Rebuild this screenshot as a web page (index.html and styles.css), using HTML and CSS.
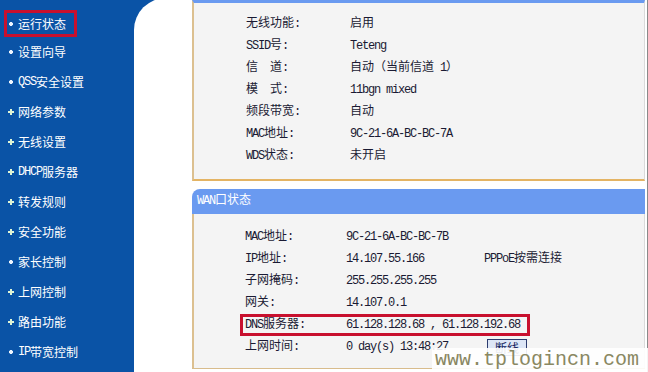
FILE: index.html
```html
<!DOCTYPE html>
<html lang="zh-CN">
<head>
<meta charset="utf-8">
<title>运行状态</title>
<link rel="stylesheet" href="styles.css">
</head>
<body>
<div class="page">
  <nav class="sidebar">
    <div class="item"><span class="box"><i class="ic dot"></i>运行状态</span></div>
    <div class="item"><i class="ic dot"></i>设置向导</div>
    <div class="item"><i class="ic dot"></i><span class="en">QSS</span>安全设置</div>
    <div class="item"><i class="ic plus"></i>网络参数</div>
    <div class="item"><i class="ic plus"></i>无线设置</div>
    <div class="item"><i class="ic plus"></i><span class="en">DHCP</span>服务器</div>
    <div class="item"><i class="ic plus"></i>转发规则</div>
    <div class="item"><i class="ic plus"></i>安全功能</div>
    <div class="item"><i class="ic dot"></i>家长控制</div>
    <div class="item"><i class="ic plus"></i>上网控制</div>
    <div class="item"><i class="ic plus"></i>路由功能</div>
    <div class="item"><i class="ic dot"></i><span class="en">IP</span>带宽控制</div>
  </nav>
  <div class="main">
    <div class="content">
      <section class="panel panel-wlan">
        <div class="rows">
          <div class="row"><span class="lbl">无线功能<span class="en">:</span></span><span class="val">启用</span></div>
          <div class="row"><span class="lbl"><span class="en">SSID</span>号<span class="en">:</span></span><span class="val en">Teteng</span></div>
          <div class="row"><span class="lbl">信<span class="en">&nbsp;&nbsp;</span>道<span class="en">:</span></span><span class="val">自动（当前信道<span class="en"> 1</span>）</span></div>
          <div class="row"><span class="lbl">模<span class="en">&nbsp;&nbsp;</span>式<span class="en">:</span></span><span class="val en">11bgn mixed</span></div>
          <div class="row"><span class="lbl">频段带宽<span class="en">:</span></span><span class="val">自动</span></div>
          <div class="row"><span class="lbl"><span class="en">MAC</span>地址<span class="en">:</span></span><span class="val en">9C-21-6A-BC-BC-7A</span></div>
          <div class="row"><span class="lbl"><span class="en">WDS</span>状态<span class="en">:</span></span><span class="val">未开启</span></div>
        </div>
      </section>
      <section class="panel panel-wan">
        <div class="head"><span class="en">WAN</span>口状态</div>
        <div class="rows">
          <div class="row"><span class="lbl"><span class="en">MAC</span>地址<span class="en">:</span></span><span class="val en">9C-21-6A-BC-BC-7B</span></div>
          <div class="row"><span class="lbl"><span class="en">IP</span>地址<span class="en">:</span></span><span class="val en">14.107.55.166</span><span class="extra"><span class="en">PPPoE</span>按需连接</span></div>
          <div class="row"><span class="lbl">子网掩码<span class="en">:</span></span><span class="val en">255.255.255.255</span></div>
          <div class="row"><span class="lbl">网关<span class="en">:</span></span><span class="val en">14.107.0.1</span></div>
          <div class="row hl"><span class="lbl"><span class="en">DNS</span>服务器<span class="en">:</span></span><span class="val en wide">61.128.128.68 , 61.128.192.68</span></div>
          <div class="row"><span class="lbl">上网时间<span class="en">:</span></span><span class="val en">0 day(s) 13:48:27</span><span class="extra"><button class="btn" type="button">断线</button></span></div>
        </div>
      </section>
    </div>
  </div>
</div>
<div class="watermark">www.tplogincn.com</div>
</body>
</html>
```

FILE: styles.css
```css
html, body {
  margin: 0;
  padding: 0;
}

body {
  width: 648px;
  height: 372px;
  overflow: hidden;
  position: relative;
  font-family: "Liberation Mono", "Noto Sans CJK SC", monospace;
  font-size: 12px;
  color: #1a1a33;
  background: #fff;
}

.en {
  font-family: "Liberation Mono", monospace;
  letter-spacing: -1.2px;
}

.page {
  display: flex;
  height: 372px;
  background: #0a53a6;
}

/* ---------- sidebar ---------- */
.sidebar {
  width: 134px;
  flex: none;
  padding-top: 7px;
  color: #fff;
}

.item {
  height: 30px;
  display: flex;
  align-items: center;
  padding-left: 7px;
  white-space: nowrap;
}

.ic {
  width: 8px;
  height: 8px;
  margin-right: 3px;
  flex: none;
  display: block;
}

.dot {
  background: radial-gradient(circle, #eef6ff 0 1.8px, transparent 2.2px);
}

.plus {
  background:
    linear-gradient(#dff5d6, #dff5d6) center / 6px 2px no-repeat,
    linear-gradient(#dff5d6, #dff5d6) center / 2px 6px no-repeat;
}

.box {
  display: flex;
  align-items: center;
  align-self: flex-end;
  height: 27px;
  box-sizing: border-box;
  margin-left: -3px;
  padding-right: 8px;
  border: 3px solid #c8102e;
}

/* ---------- main ---------- */
.main {
  flex: 1;
  display: flex;
  flex-direction: column;
}

.content {
  flex: 1;
  margin-top: -2px;
  background: #fff;
  border-top-left-radius: 32px;
  padding: 0 2px 0 58px;
  border-right: 1px solid #8a8a8a;
}

.panel {
  background: #f4f4f4;
  border-left: 2px solid #dcc090;
  border-right: 1px solid #dadada;
}

.panel-wlan {
  margin-top: 2px;
  border-top: 3px solid #6a9af0;
  border-bottom: 2px solid #e4b464;
}

.panel-wlan .rows {
  padding: 10px 0 12px 52px;
}

.panel-wlan .lbl {
  width: 104px;
}

.panel-wan {
  margin-top: 8px;
  border-bottom: 1px solid #d8bc8c;
  border-left: none;
  background: transparent;
  border-right: none;
}

.head {
  height: 25px;
  line-height: 25px;
  background: #6a9af0;
  color: #fff;
  padding-left: 5px;
  border-top-left-radius: 8px;
}

.panel-wan .rows {
  background: #f4f4f4;
  border-left: 2px solid #dcc090;
  border-right: 1px solid #dadada;
  padding: 12px 0 10px 51px;
}

.panel-wan .lbl {
  width: 101px;
}

.panel-wan .val {
  width: 138px;
}

.row {
  display: flex;
  align-items: center;
  height: 22px;
  line-height: 22px;
  white-space: nowrap;
}

.lbl,
.val {
  flex: none;
}

.val.wide {
  width: auto;
}

.row.hl {
  box-sizing: border-box;
  width: 290px;
  margin-left: -5px;
  padding-left: 2px;
  border: 3px solid #c8102e;
  line-height: 16px;
}

.extra {
  display: flex;
  align-items: center;
}

.btn {
  margin: 0 0 0 3px;
  height: 17px;
  padding: 0 7px;
  line-height: 15px;
  border: 1px solid #2b3b6e;
  background: #dde6f6;
  color: #10205a;
  font-family: "Noto Sans CJK SC", sans-serif;
  font-size: 12px;
}

/* ---------- watermark ---------- */
.watermark {
  position: absolute;
  right: 0;
  bottom: 0;
  width: 213px;
  height: 24px;
  padding-left: 3px;
  line-height: 24px;
  background: rgba(255, 255, 255, 0.9);
  color: #8a8862;
  font-family: "Liberation Mono", monospace;
  font-size: 20px;
}
```
